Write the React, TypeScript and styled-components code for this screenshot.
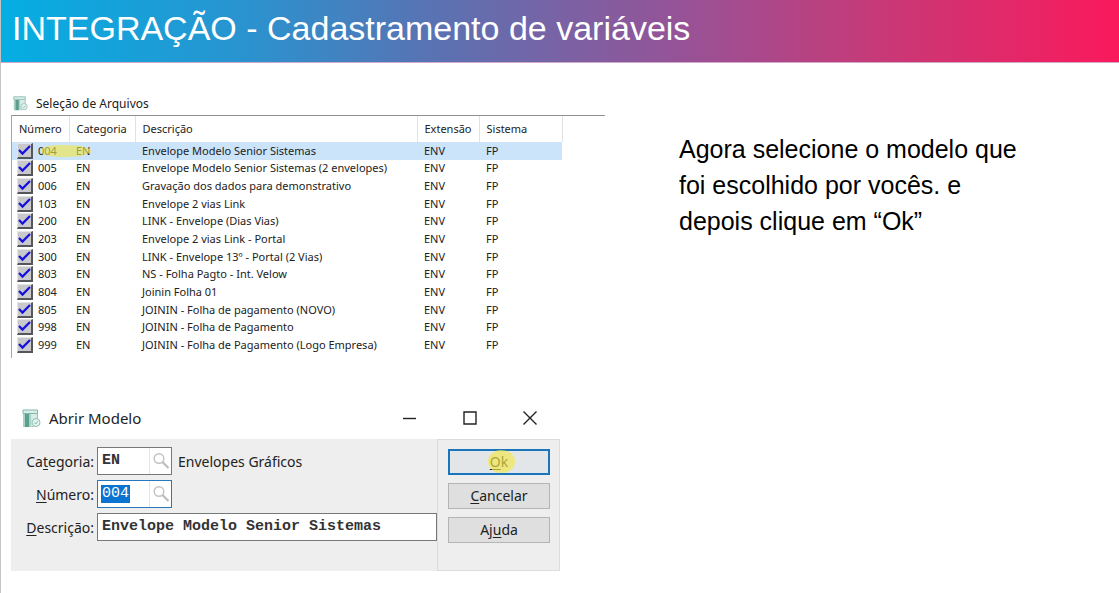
import React from "react";
import styled, { createGlobalStyle } from "styled-components";

const uiFont = `"Noto Sans", "Open Sans", sans-serif`;
const slideFont = `"Liberation Sans", Arial, sans-serif`;
const monoFont = `"Liberation Mono", "Courier New", monospace`;

const GlobalStyle = createGlobalStyle`
  *, *::before, *::after { box-sizing: border-box; }
  body { margin: 0; background: #fff; color: #000; font-family: ${slideFont}; }
`;

const Slide = styled.div`
  min-height: 100vh;
  border-left: 1px solid #c4c4c4;
`;

const Banner = styled.header`
  padding: 8px 11px 14px;
  background: linear-gradient(90deg, #04aee3 0%, #2a93cf 22%, #5575b5 37%, #9a5195 62%, #c63a78 78%, #fa195c 100%);
  border-bottom: 1px solid #d3a9cb;
`;

const Title = styled.h1`
  margin: 0;
  color: #fff;
  font-size: 34px;
  line-height: 40px;
  font-weight: 400;
`;

const Content = styled.main`
  display: grid;
  grid-template-columns: minmax(0, 594fr) minmax(0, 514fr);
  padding-left: 10px;
`;

const Screens = styled.div`
  display: flex;
  flex-direction: column;
  gap: 42px;
  padding-top: 32px;
`;

const Instruction = styled.p`
  margin: 0;
  padding: 68px 90px 0 74px;
  font-size: 25px;
  line-height: 36px;
`;

const Panel = styled.section`
  font-family: ${uiFont};
  color: #222;
`;

const PanelTitle = styled.h2`
  display: flex;
  align-items: center;
  gap: 8px;
  margin: 0;
  padding: 0 0 3px 2px;
  height: 20px;
  font-size: 12px;
  font-weight: 400;
`;

const ListFrame = styled.div`
  padding-bottom: 4px;
  border-top: 1px solid #8f9195;
  border-left: 1px solid #a3a5a9;
`;

const FileTable = styled.table`
  width: 550px;
  height: 238px;
  table-layout: fixed;
  border-collapse: collapse;
  font-size: 11px;
  line-height: 16px;
  white-space: nowrap;
`;

const HeadCell = styled.th<{ $width: number }>`
  width: ${(p) => p.$width}px;
  height: 26px;
  padding: 0 0 0 7px;
  border-right: 1px solid #e2e2e2;
  text-align: left;
  font-weight: 400;
`;

const FileRow = styled.tr<{ $selected: boolean }>`
  background: ${(p) => (p.$selected ? "#cce4fa" : "transparent")};
`;

const Cell = styled.td`
  padding: 0 0 0 7px;
`;

const NumberCell = styled.td`
  position: relative;
  padding: 0 0 0 5px;
`;

const RowLabel = styled.label`
  display: flex;
  align-items: center;
  gap: 5px;
`;

const CheckFace = styled.span`
  display: grid;
  width: 16px;
  height: 16px;
  background: #c9c9cb;
  border: 1px solid #e4e4e4;
  border-right: 2px solid #55565a;
  border-bottom: 2px solid #55565a;

  > * { grid-area: 1 / 1; }
  svg { width: 13px; height: 13px; pointer-events: none; }
`;

const CheckInput = styled.input`
  appearance: none;
  margin: 0;
  width: 13px;
  height: 13px;
  &:not(:checked) + svg { visibility: hidden; }
`;

const RowMarker = styled.span`
  position: absolute;
  left: 29px;
  top: 3px;
  width: 50px;
  height: 12px;
  border-radius: 40% 50% 50% 40%;
  background: rgba(240, 229, 74, 0.62);
  pointer-events: none;
`;

const Dialog = styled.section`
  width: 549px;
  font-family: ${uiFont};
  font-size: 14px;
  color: #222;
`;

const DialogBar = styled.header`
  display: flex;
  align-items: center;
  justify-content: space-between;
  height: 39px;
  padding: 0 20px 3px 11px;
`;

const DialogTitle = styled.h2`
  display: flex;
  align-items: center;
  gap: 8px;
  margin: 0;
  font-size: 15px;
  line-height: 20px;
  font-weight: 400;
`;

const WindowControls = styled.div`
  display: flex;
  gap: 40px;
`;

const WindowButton = styled.button`
  display: grid;
  place-items: center;
  width: 20px;
  height: 20px;
  padding: 0;
  border: 0;
  background: none;
`;

const DialogBody = styled.div`
  display: flex;
  background: #eee;
`;

const Fields = styled.form`
  flex: 1;
  display: flex;
  flex-direction: column;
  gap: 5px;
  padding: 8px 0 30px;
`;

const FieldRow = styled.div`
  display: flex;
  align-items: center;
  gap: 3px;
`;

const FieldLabel = styled.label`
  width: 83px;
  text-align: right;
`;

const FieldBox = styled.div<{ $wide?: boolean; $focused?: boolean }>`
  display: flex;
  align-items: center;
  width: ${(p) => (p.$wide ? 340 : 75)}px;
  height: 28px;
  padding-left: 3px;
  border: 1px solid ${(p) => (p.$focused ? "#2878be" : "#77787a")};
  background: #fff;
`;

const TextInput = styled.input<{ $selected?: boolean; $fill?: boolean }>`
  width: ${(p) => (p.$fill ? "100%" : "29px")};
  height: 18px;
  margin: 0;
  padding: 0 0 0 1px;
  border: 0;
  outline: 0;
  font-family: ${monoFont};
  font-size: 15px;
  line-height: 18px;
  font-weight: ${(p) => (p.$selected ? 400 : 700)};
  color: ${(p) => (p.$selected ? "#fff" : "#333")};
  background: ${(p) => (p.$selected ? "#0a74d0" : "transparent")};
`;

const LookupButton = styled.button`
  display: grid;
  place-items: center;
  width: 22px;
  height: 26px;
  margin-left: auto;
  padding: 0;
  border: 0;
  border-left: 1px solid #e4e4e4;
  background: none;
`;

const FieldHint = styled.span`
  padding-left: 3px;
`;

const Actions = styled.div`
  display: flex;
  flex-direction: column;
  gap: 8px;
  width: 123px;
  padding: 9px 9px 26px 10px;
  border: 1px solid #dcdcdc;
`;

const ActionButton = styled.button<{ $primary?: boolean }>`
  position: relative;
  height: 26px;
  padding: 0;
  border: ${(p) => (p.$primary ? "2px solid #1b75bb" : "1px solid #b4b4b4")};
  background: ${(p) => (p.$primary ? "#e3e6e8" : "#dfdfdf")};
  font-family: ${uiFont};
  font-size: 14px;
  line-height: 20px;
  color: #222;
`;

const ClickMarker = styled.span`
  position: absolute;
  left: 38px;
  top: -1px;
  width: 27px;
  height: 23px;
  border-radius: 50%;
  background: rgba(245, 232, 70, 0.65);
`;

const AccessKey = styled.u`
  text-underline-offset: 2px;
`;

function CalcIcon({ size }: { size: number }) {
  return (
    <svg width={size} height={size} viewBox="0 0 19 19" fill="none" aria-hidden="true">
      <path d="M1 1h14.5v3.5H1z" stroke="#7fb9aa" fill="#d9ece7" />
      <path d="M1 5h2v13H1z" fill="#a9d2c7" />
      <path d="M3 5h4.5v13H3z" fill="#5c9f8e" />
      <path d="M7.5 5h2v13h-2z" fill="#a9d2c7" />
      <path d="M9.500 5h6v5h-6z" fill="#d9ece7" />
      <path d="M15.500 4.500v5M9.500 17.500h2" stroke="#8fc4b6" />
      <circle cx="14" cy="13.500" r="4" fill="#e6f3ef" stroke="#8abfb1" />
      <path d="M12.300 13.600l1.400 1.400 2-2.800" stroke="#7fb9aa" />
    </svg>
  );
}

function CheckMark() {
  return (
    <svg viewBox="0 0 13 13" fill="none" aria-hidden="true">
      <path d="M1 6l3.500 3.500L12 2" stroke="#1512dc" strokeWidth="2.300" />
    </svg>
  );
}

function LookupIcon() {
  return (
    <svg width="18" height="18" viewBox="0 0 18 18" fill="none" aria-hidden="true">
      <circle cx="7" cy="6.500" r="4.800" stroke="#c2c2c2" strokeWidth="1.400" />
      <path d="M10.500 10l6 6" stroke="#bdbdbd" strokeWidth="2.200" />
    </svg>
  );
}

const columns = [
  { name: "Número", width: 57 },
  { name: "Categoria", width: 66 },
  { name: "Descrição", width: 282 },
  { name: "Extensão", width: 62 },
  { name: "Sistema", width: 83 },
];

const files = [
  ["004", "Envelope Modelo Senior Sistemas"],
  ["005", "Envelope Modelo Senior Sistemas (2 envelopes)"],
  ["006", "Gravação dos dados para demonstrativo"],
  ["103", "Envelope 2 vias Link"],
  ["200", "LINK - Envelope (Dias Vias)"],
  ["203", "Envelope 2 vias Link - Portal"],
  ["300", "LINK - Envelope 13º - Portal (2 Vias)"],
  ["803", "NS - Folha Pagto - Int. Velow"],
  ["804", "Joinin Folha 01"],
  ["805", "JOININ - Folha de pagamento (NOVO)"],
  ["998", "JOININ - Folha de Pagamento"],
  ["999", "JOININ - Folha de Pagamento (Logo Empresa)"],
];

function FileList() {
  return (
    <Panel>
      <PanelTitle>
        <CalcIcon size={15} />
        Seleção de Arquivos
      </PanelTitle>
      <ListFrame>
        <FileTable>
          <thead>
            <tr>
              {columns.map((c) => (
                <HeadCell key={c.name} $width={c.width}>{c.name}</HeadCell>
              ))}
            </tr>
          </thead>
          <tbody>
            {files.map(([number, description], i) => (
              <FileRow key={number} $selected={i === 0}>
                <NumberCell>
                  <RowLabel>
                    <CheckFace>
                      <CheckInput type="checkbox" defaultChecked />
                      <CheckMark />
                    </CheckFace>
                    {number}
                  </RowLabel>
                  {i === 0 && <RowMarker />}
                </NumberCell>
                <Cell>EN</Cell>
                <Cell>{description}</Cell>
                <Cell>ENV</Cell>
                <Cell>FP</Cell>
              </FileRow>
            ))}
          </tbody>
        </FileTable>
      </ListFrame>
    </Panel>
  );
}

function OpenModelDialog() {
  return (
    <Dialog>
      <DialogBar>
        <DialogTitle>
          <CalcIcon size={19} />
          Abrir Modelo
        </DialogTitle>
        <WindowControls>
          <WindowButton type="button" aria-label="Minimizar">
            <svg width="14" height="14" viewBox="0 0 14 14" stroke="#222" strokeWidth="1.4"><path d="M0 7.5h13" /></svg>
          </WindowButton>
          <WindowButton type="button" aria-label="Maximizar">
            <svg width="14" height="14" viewBox="0 0 14 14" fill="none" stroke="#222" strokeWidth="1.4"><path d="M1 1h12v12H1z" /></svg>
          </WindowButton>
          <WindowButton type="button" aria-label="Fechar">
            <svg width="14" height="14" viewBox="0 0 14 14" stroke="#222" strokeWidth="1.4"><path d="M.5.5l13 13M13.5.5l-13 13" /></svg>
          </WindowButton>
        </WindowControls>
      </DialogBar>
      <DialogBody>
        <Fields>
          <FieldRow>
            <FieldLabel htmlFor="category">Ca<AccessKey>t</AccessKey>egoria:</FieldLabel>
            <FieldBox>
              <TextInput id="category" defaultValue="EN" />
              <LookupButton type="button" aria-label="Pesquisar categoria"><LookupIcon /></LookupButton>
            </FieldBox>
            <FieldHint>Envelopes Gráficos</FieldHint>
          </FieldRow>
          <FieldRow>
            <FieldLabel htmlFor="number"><AccessKey>N</AccessKey>úmero:</FieldLabel>
            <FieldBox $focused>
              <TextInput id="number" defaultValue="004" $selected />
              <LookupButton type="button" aria-label="Pesquisar número"><LookupIcon /></LookupButton>
            </FieldBox>
          </FieldRow>
          <FieldRow>
            <FieldLabel htmlFor="description"><AccessKey>D</AccessKey>escrição:</FieldLabel>
            <FieldBox $wide>
              <TextInput id="description" defaultValue="Envelope Modelo Senior Sistemas" $fill />
            </FieldBox>
          </FieldRow>
        </Fields>
        <Actions>
          <ActionButton type="button" $primary>
            <AccessKey>O</AccessKey>k
            <ClickMarker />
          </ActionButton>
          <ActionButton type="button"><AccessKey>C</AccessKey>ancelar</ActionButton>
          <ActionButton type="button">Aj<AccessKey>u</AccessKey>da</ActionButton>
        </Actions>
      </DialogBody>
    </Dialog>
  );
}

export default function App() {
  return (
    <>
      <GlobalStyle />
      <Slide>
        <Banner>
          <Title>INTEGRAÇÃO - Cadastramento de variáveis</Title>
        </Banner>
        <Content>
          <Screens>
            <FileList />
            <OpenModelDialog />
          </Screens>
          <Instruction>
            Agora selecione o modelo que foi escolhido por vocês. e depois clique em “Ok”
          </Instruction>
        </Content>
      </Slide>
    </>
  );
}
